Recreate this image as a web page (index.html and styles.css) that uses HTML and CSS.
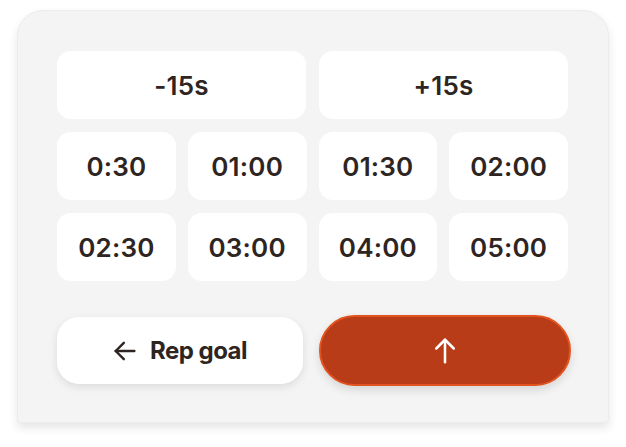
FILE: index.html
```html
<!DOCTYPE html>
<html>
<head>
<meta charset="utf-8">
<link rel="stylesheet" href="styles.css">
</head>
<body>
<div class="card">
  <div class="row row-2">
    <button class="btn">-15s</button>
    <button class="btn">+15s</button>
  </div>
  <div class="row row-4">
    <button class="btn">0:30</button>
    <button class="btn">01:00</button>
    <button class="btn">01:30</button>
    <button class="btn">02:00</button>
  </div>
  <div class="row row-4">
    <button class="btn">02:30</button>
    <button class="btn">03:00</button>
    <button class="btn">04:00</button>
    <button class="btn">05:00</button>
  </div>
  <div class="actions">
    <button class="back">
      <svg class="back-icon" width="28" height="28" viewBox="0 0 24 24" fill="none" stroke="currentColor" stroke-width="2.1" stroke-linecap="round" stroke-linejoin="round"><path d="M20 12H4"/><path d="M11 19l-7-7 7-7"/></svg>
      <span>Rep goal</span>
    </button>
    <button class="go">
      <svg width="30" height="30" viewBox="0 0 24 24" fill="none" stroke="currentColor" stroke-width="2" stroke-linecap="round" stroke-linejoin="round"><path d="M12 21V3"/><path d="M5 10l7-7 7 7"/></svg>
    </button>
  </div>
</div>
</body>
</html>
```

FILE: styles.css
```css
* { box-sizing: border-box; }
html, body { margin: 0; padding: 0; background: #ffffff; }
body {
  width: 626px;
  height: 447px;
  padding: 10px 16px 0 17px;
  font-family: Inter, "Liberation Sans", sans-serif;
  color: #2e2522;
}
.card {
  width: 592px;
  height: 413px;
  background: #f4f4f4;
  border-radius: 26px 26px 4px 4px;
  border: 1px solid #ececec;
  box-shadow: 0 5px 10px rgba(0,0,0,0.10);
  padding: 40px 40px 0 39px;
  display: flex;
  flex-direction: column;
  gap: 13px;
}
.row { display: grid; gap: 13px; }
.row-2 { grid-template-columns: 1fr 1fr; }
.row-4 { grid-template-columns: repeat(4, 1fr); gap: 12px; }
.btn {
  height: 68px;
  border: none;
  background: #ffffff;
  border-radius: 14px;
  font-family: inherit;
  font-size: 26px;
  font-weight: 600;
  letter-spacing: 0.2px;
  color: #2e2522;
  padding: 0;
}
.actions {
  margin-top: 21px;
  display: grid;
  grid-template-columns: 246px 252px;
  gap: 16px;
  align-items: center;
}
.back {
  height: 67px;
  border: none;
  background: #ffffff;
  border-radius: 22px;
  box-shadow: 0 3px 8px rgba(0,0,0,0.10);
  display: flex;
  align-items: center;
  justify-content: center;
  gap: 11px;
  font-family: inherit;
  font-size: 24px;
  font-weight: 700;
  letter-spacing: -0.5px;
  color: #2e2522;
  padding: 0;
}
.back-icon { margin-left: -2px; }
.go {
  height: 71px;
  border: 2px solid #e2531f;
  background: #b83c17;
  border-radius: 36px;
  box-shadow: 0 4px 10px rgba(0,0,0,0.12);
  display: flex;
  align-items: center;
  justify-content: center;
  color: #ffffff;
  padding: 0;
}
```
